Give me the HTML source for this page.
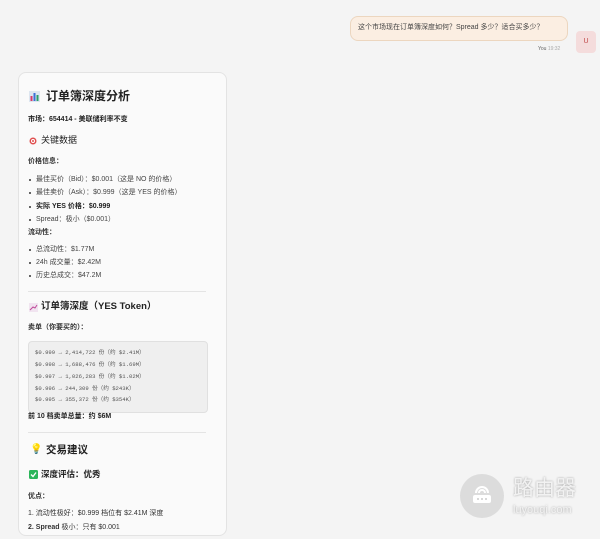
<!DOCTYPE html><html><head><meta charset="utf-8"><style>
body{margin:0;width:600px;height:539px;overflow:hidden;background:#f4f4f4;font-family:"Liberation Sans","Noto Sans CJK SC",sans-serif;color:#222;position:relative}
.a{position:absolute;white-space:nowrap;line-height:1}
.s{font-size:7px}
.b{font-weight:bold}
.m{font-family:"Liberation Mono","Noto Sans CJK SC",monospace;font-size:5.6px;color:#555}
.dot{position:absolute;width:2px;height:2px;border-radius:50%;background:#333}
.hr{position:absolute;left:28px;width:178px;height:1px;background:#e4e4e4}
</style></head><body>
<div class="a" style="left:350px;top:16px;width:216px;height:23px;background:#fbeee2;border:1px solid #ecd6bf;border-radius:8px"></div>
<div class="a s" style="left:358px;top:24px;color:#444">这个市场现在订单簿深度如何？Spread 多少？适合买多少？</div>
<div class="a" style="left:576px;top:31px;width:20px;height:22px;background:#f4dcdc;border-radius:4px;color:#c04848;font-size:7px;text-align:center;line-height:22px">U</div>
<div class="a" style="left:538px;top:47px;font-size:5px;color:#666">You <span style="color:#aaa">19:32</span></div>
<div class="a" style="left:18px;top:72px;width:207px;height:462px;background:#fafafa;border:1px solid #e3e3e3;border-radius:8px"></div>
<svg class="a" style="left:29px;top:91px" width="11" height="11"><rect x="0" y="0" width="11" height="11" fill="#dde6f0"/><rect x="1.5" y="5" width="2" height="5" fill="#d33a6a"/><rect x="4.5" y="2" width="2" height="8" fill="#3b6fd6"/><rect x="7.5" y="4" width="2" height="6" fill="#2a9d6a"/></svg>
<div class="a b" style="left:46px;top:90px;font-size:12px;color:#222">订单簿深度分析</div>
<div class="a s b" style="left:28px;top:116px">市场：654414 - 美联储利率不变</div>
<svg class="a" style="left:29px;top:137px" width="8" height="8"><circle cx="4" cy="4" r="3.5" fill="#e05050"/><circle cx="4" cy="4" r="2" fill="#fff"/><circle cx="4" cy="4" r="1" fill="#e05050"/></svg>
<div class="a" style="left:41px;top:136px;font-size:9px">关键数据</div>
<div class="a s b" style="left:28px;top:158px;color:#333">价格信息：</div>
<div class="dot" style="left:29px;top:179px"></div><div class="a s" style="left:36px;top:176px;color:#444">最佳买价（Bid）：$0.001（这是 NO 的价格）</div>
<div class="dot" style="left:29px;top:192px"></div><div class="a s" style="left:36px;top:189px;color:#444">最佳卖价（Ask）：$0.999（这是 YES 的价格）</div>
<div class="dot" style="left:29px;top:206px"></div><div class="a s b" style="left:36px;top:203px">实际 YES 价格：$0.999</div>
<div class="dot" style="left:29px;top:219px"></div><div class="a s" style="left:36px;top:216px;color:#444">Spread：极小（$0.001）</div>
<div class="a s b" style="left:28px;top:229px;color:#333">流动性：</div>
<div class="dot" style="left:29px;top:249px"></div><div class="a s" style="left:36px;top:246px;color:#444">总流动性：$1.77M</div>
<div class="dot" style="left:29px;top:262px"></div><div class="a s" style="left:36px;top:259px;color:#444">24h 成交量：$2.42M</div>
<div class="dot" style="left:29px;top:275px"></div><div class="a s" style="left:36px;top:272px;color:#444">历史总成交：$47.2M</div>
<div class="hr" style="top:291px"></div>
<svg class="a" style="left:29px;top:303px" width="9" height="9"><rect width="9" height="9" fill="#f1e4f0"/><path d="M1 7L4 4L6 5L8 2" stroke="#c04a9a" fill="none"/></svg>
<div class="a b" style="left:41px;top:302px;font-size:9.5px">订单簿深度（YES Token）</div>
<div class="a s b" style="left:28px;top:324px;color:#333">卖单（你要买的）：</div>
<div class="a" style="left:28px;top:341px;width:178px;height:70px;background:#efefef;border:1px solid #e0e0e0;border-radius:4px"></div>
<div class="a m" style="left:35px;top:350px">$0.999 → 2,414,722 份（约 $2.41M）</div>
<div class="a m" style="left:35px;top:362px">$0.998 → 1,688,476 份（约 $1.69M）</div>
<div class="a m" style="left:35px;top:374px">$0.997 → 1,026,283 份（约 $1.02M）</div>
<div class="a m" style="left:35px;top:386px">$0.996 → 244,309 份（约 $243K）</div>
<div class="a m" style="left:35px;top:397px">$0.995 → 355,372 份（约 $354K）</div>
<div class="a s b" style="left:28px;top:413px">前 10 档卖单总量：约 $6M</div>
<div class="hr" style="top:432px"></div>
<div class="a" style="left:30px;top:445px;font-size:10px;color:#e8b820">💡</div>
<div class="a b" style="left:46px;top:445px;font-size:10.5px">交易建议</div>
<svg class="a" style="left:29px;top:470px" width="9" height="9"><rect width="9" height="9" rx="1.5" fill="#2bb55a"/><path d="M2 4.5L4 6.5L7 2.5" stroke="#fff" stroke-width="1.3" fill="none"/></svg>
<div class="a b" style="left:41px;top:470px;font-size:8.5px">深度评估：优秀</div>
<div class="a s b" style="left:28px;top:493px;color:#333">优点：</div>
<div class="a s" style="left:28px;top:510px;color:#333">1. 流动性极好：$0.999 档位有 $2.41M 深度</div>
<div class="a s" style="left:28px;top:524px;color:#333"><b>2. Spread</b> 极小：只有 $0.001</div>
<div class="a" style="left:460px;top:474px;width:44px;height:44px;border-radius:50%;background:rgba(200,200,200,.55)"></div>
<svg class="a" style="left:468px;top:482px" width="28" height="28"><path d="M8 11A6 6 0 0 1 20 11M11 11A3 3 0 0 1 17 11" stroke="#fff" stroke-width="2" fill="none"/><rect x="5" y="13" width="18" height="8" rx="2" fill="#fff"/><circle cx="10" cy="17" r="1" fill="#ccc"/><circle cx="14" cy="17" r="1" fill="#ccc"/><circle cx="18" cy="17" r="1" fill="#ccc"/></svg>
<div class="a" style="left:513px;top:478px;font-size:21px;color:#f2f2f2;text-shadow:0 0 2px rgba(0,0,0,.35)">路由器</div>
<div class="a" style="left:513px;top:505px;font-size:11px;color:#f2f2f2;text-shadow:0 0 2px rgba(0,0,0,.35)">luyouqi.com</div>
</body></html>
